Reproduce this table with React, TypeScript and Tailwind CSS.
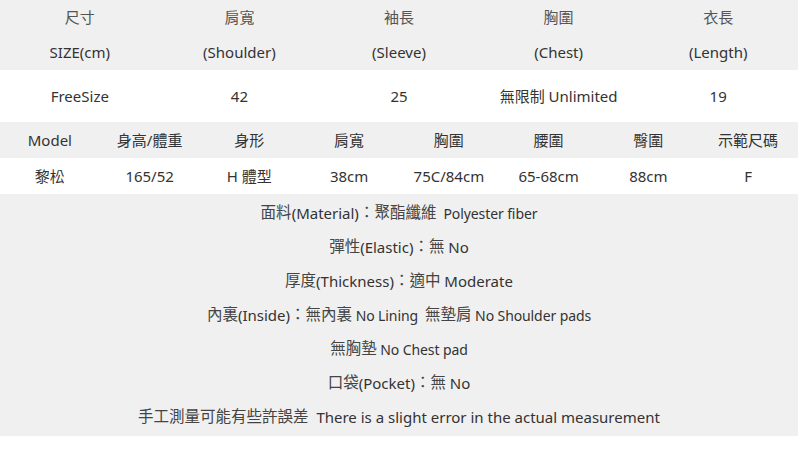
import React from "react";

const font = { fontFamily: '"Noto Sans", "Noto Sans CJK TC", sans-serif' };

const top1 = ["尺寸", "肩寬", "袖長", "胸圍", "衣長"];
const top2 = ["SIZE(cm)", "(Shoulder)", "(Sleeve)", "(Chest)", "(Length)"];
const top3 = ["FreeSize", "42", "25", "無限制 Unlimited", "19"];
const m1 = ["Model", "身高/體重", "身形", "肩寬", "胸圍", "腰圍", "臀圍", "示範尺碼"];
const m2 = ["黎松", "165/52", "H 體型", "38cm", "75C/84cm", "65-68cm", "88cm", "F"];

function Row({ cells, h, cls }: { cells: string[]; h: string; cls: string }) {
  return (
    <div className={`flex ${h} items-center`}>
      {cells.map((c, i) => (
        <div key={i} className={`flex-1 text-center ${cls}`}>
          {c}
        </div>
      ))}
    </div>
  );
}

function E({ children, s }: { children: React.ReactNode; s?: boolean }) {
  return (
    <span className={s ? "text-[14px] tracking-[-0.1px]" : "text-[15px]"}>
      {children}
    </span>
  );
}

function C({ children }: { children: React.ReactNode }) {
  return <span className="text-[15.5px] text-[#444]">{children}</span>;
}

export default function App() {
  return (
    <div className="w-[798px] h-[472px] bg-white text-[#333] text-[15px]" style={font}>
      <div className="bg-[#f0f0f0]">
        <Row cells={top1} h="h-[35px]" cls="text-[#555]" />
        <Row cells={top2} h="h-[35px]" cls="" />
      </div>
      <Row cells={top3} h="h-[52px]" cls="" />
      <div className="bg-[#f0f0f0]">
        <Row cells={m1} h="h-[36px]" cls="" />
      </div>
      <Row cells={m2} h="h-[36px]" cls="" />
      <div className="bg-[#f0f0f0] pt-[2px] pb-[2px] flex flex-col items-center whitespace-pre">
        <div className="h-[34px] flex items-center">
          <C>面料</C><E>(Material)</E><C>：</C><C>聚酯纖維</C><E s>{"  Polyester fiber"}</E>
        </div>
        <div className="h-[34px] flex items-center">
          <C>彈性</C><E>(Elastic)</E><C>：</C><C>無</C><E>{" No"}</E>
        </div>
        <div className="h-[34px] flex items-center">
          <C>厚度</C><E>(Thickness)</E><C>：</C><C>適中</C><E>{" Moderate"}</E>
        </div>
        <div className="h-[34px] flex items-center">
          <C>內裏</C><E>(Inside)</E><C>：</C><C>無內裏</C><E s>{" No Lining  "}</E><C>無墊肩</C><E s>{" No Shoulder pads"}</E>
        </div>
        <div className="h-[34px] flex items-center">
          <C>無胸墊</C><E s>{" No Chest pad"}</E>
        </div>
        <div className="h-[34px] flex items-center">
          <C>口袋</C><E>(Pocket)</E><C>：</C><C>無</C><E>{" No"}</E>
        </div>
        <div className="h-[34px] flex items-center">
          <C>手工測量可能有些許誤差</C><E>{"  There is a slight error in the actual measurement"}</E>
        </div>
      </div>
    </div>
  );
}
